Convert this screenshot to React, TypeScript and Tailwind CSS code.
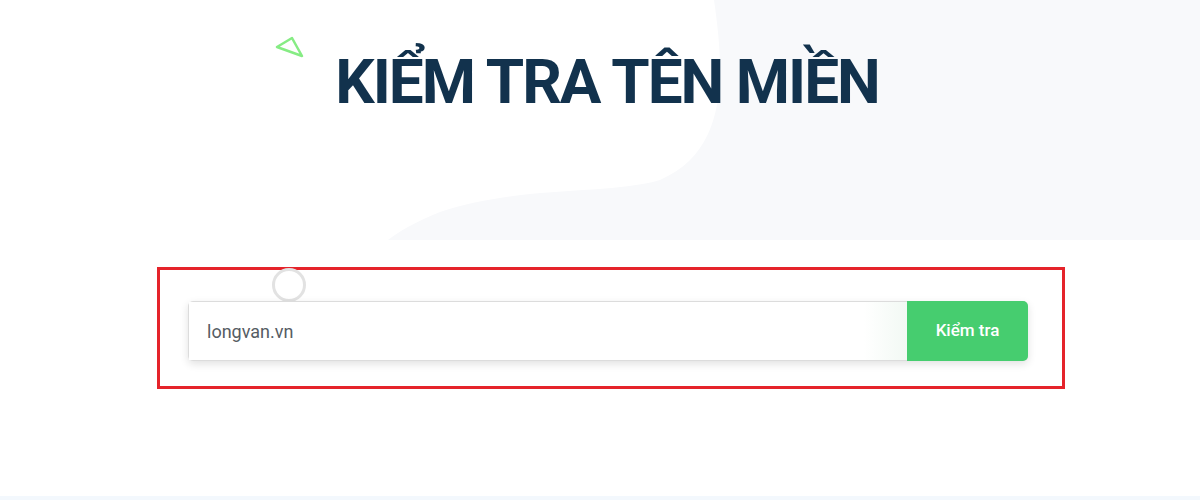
export default function App() {
  return (
    <div className="w-[1200px] h-[500px] bg-white overflow-hidden flex flex-col" style={{ fontFamily: "Roboto, 'Noto Sans', sans-serif" }}>
      <section className="relative flex-1">
        {/* decorative background blob */}
        <svg className="absolute left-0 top-0" width="1200" height="240" viewBox="0 0 1200 240">
          <path
            d="M714 0 C 724 70 730 150 660 180 C 610 195 520 185 440 212 C 415 222 398 232 388 240 L 1200 240 L 1200 0 Z"
            fill="#f8f9fb"
          />
        </svg>
        {/* triangle */}
        <svg className="absolute left-[272px] top-[34px]" width="34" height="28" viewBox="0 0 34 28">
          <path d="M5 13 L20 4 L30 22 Z" fill="none" stroke="#86ec84" strokeWidth="2.5" strokeLinejoin="round" />
        </svg>

        <div className="relative flex flex-col">
          <h1 className="pt-[44px] pl-[14px] text-center text-[62px] leading-[76px] font-bold text-[#12324d] tracking-[-2px]">
            KIỂM TRA TÊN MIỀN
          </h1>

          <div className="relative ml-[157px] mt-[147px] w-[908px] h-[122px] border-[3px] border-[#e5232a] pl-[28px] pr-[34px] pt-[31px]">
            <div className="absolute left-[112px] top-[-2px] w-[34px] h-[34px] rounded-full border-[3px] border-[#e2e2e2]" />
            <div className="relative flex h-[60px] rounded-[5px] bg-white border border-[#dcdcdc] shadow-[0_3px_8px_rgba(0,0,0,0.12)]">
              <div className="flex-1 flex items-center pl-[18px] text-[18px] text-[#555c63] bg-gradient-to-r from-white from-94% to-[#f2f9f4]">
                longvan.vn
              </div>
              <button className="w-[121px] -my-px -mr-px rounded-r-[5px] bg-[#46cd6f] text-white text-[17px] font-medium">
                Kiểm tra
              </button>
            </div>
          </div>
        </div>
      </section>
      <div className="h-[4px] bg-[#f3f8fd]" />
    </div>
  );
}
